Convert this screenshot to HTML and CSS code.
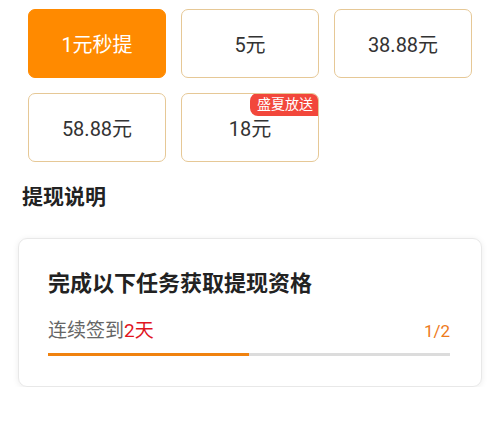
FILE: index.html
```html
<!DOCTYPE html>
<html lang="zh-CN">
<head>
<meta charset="utf-8">
<link rel="stylesheet" href="styles.css">
</head>
<body>
<div class="page">
  <div class="amounts">
    <div class="amount active">1元秒提</div>
    <div class="amount">5元</div>
    <div class="amount">38.88元</div>
    <div class="amount">58.88元</div>
    <div class="amount">18元<span class="badge">盛夏放送</span></div>
  </div>
  <h2 class="section-title">提现说明</h2>
  <div class="card">
    <div class="card-title">完成以下任务获取提现资格</div>
    <div class="task-row">
      <span class="task-name">连续签到<em>2天</em></span>
      <span class="task-count">1/2</span>
    </div>
    <div class="progress"><div class="progress-fill" style="width:50%"></div></div>
  </div>
</div>
</body>
</html>
```

FILE: styles.css
```css
* { box-sizing: border-box; }
html, body { margin: 0; padding: 0; background: #fff; }
body {
  font-family: Roboto, "Noto Sans CJK SC", "Noto Sans", sans-serif;
  color: #333;
}
.page {
  padding: 9px 18px 0 18px;
}
.amounts {
  display: grid;
  grid-template-columns: repeat(3, 138px);
  column-gap: 15px;
  row-gap: 15px;
  padding-left: 10px;
}
.amount {
  position: relative;
  height: 69px;
  border: 1px solid #e6c896;
  border-radius: 7px;
  display: flex;
  align-items: center;
  justify-content: center;
  font-size: 20px;
  color: #333;
  overflow: hidden;
}
.amount.active {
  background: #ff8a00;
  border-color: #ff8a00;
  color: #fff;
}
.badge {
  position: absolute;
  top: -1px;
  right: -1px;
  height: 23px;
  padding: 0 6px 0 7px;
  background: #f2473b;
  color: #fff;
  font-size: 14px;
  line-height: 23px;
  border-radius: 8px 7px 0 8px;
}
.section-title {
  margin: 21px 0 0 4px;
  font-size: 21px;
  line-height: 28px;
  font-weight: bold;
  color: #222;
}
.card {
  margin-top: 27px;
  border: 1px solid #e8e8e8;
  border-radius: 9px;
  box-shadow: 0 1px 6px rgba(0,0,0,0.08);
  padding: 30px 30px 30px 29px;
}
.card-title {
  font-size: 22px;
  line-height: 30px;
  font-weight: bold;
  color: #222;
}
.task-row {
  margin-top: 19px;
  display: flex;
  justify-content: space-between;
  align-items: baseline;
  line-height: 26px;
}
.task-name {
  font-size: 19px;
  color: #666;
}
.task-name em {
  font-style: normal;
  color: #e0141e;
}
.task-count {
  font-size: 17px;
  color: #ee7a1a;
  margin-right: 1px;
}
.progress {
  margin-top: 9px;
  height: 3px;
  background: #dcdcdc;
  margin-right: 1px;
}
.progress-fill {
  height: 100%;
  background: #f0820f;
}
```
